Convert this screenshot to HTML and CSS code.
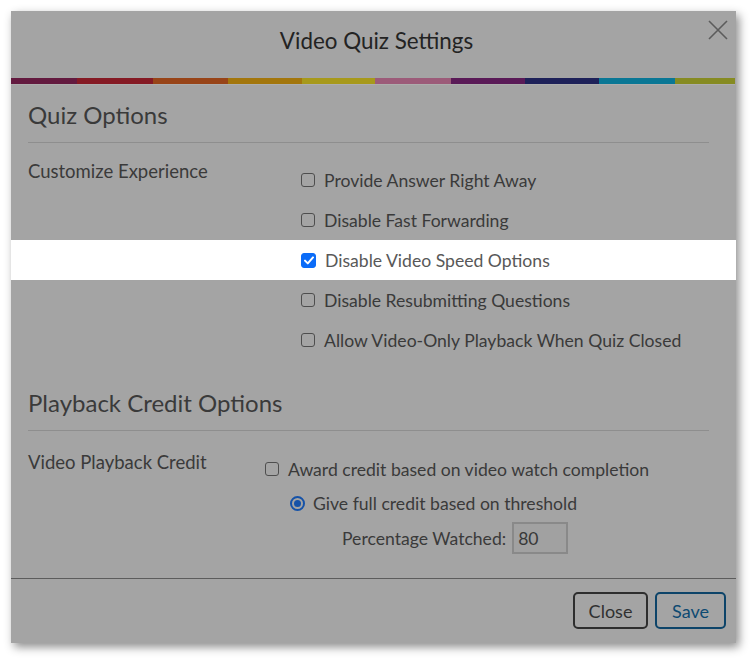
FILE: index.html
```html
<!DOCTYPE html>
<html>
<head>
<meta charset="utf-8">
<link rel="stylesheet" href="styles.css">
</head>
<body>
<div class="dialog">
  <div class="header">
    <h1 class="title">Video Quiz Settings</h1>
    <button class="close-x" aria-label="Close">
      <svg width="20" height="20" viewBox="0 0 20 20"><path d="M1 1L19 19M19 1L1 19" stroke="#5c5c5c" stroke-width="1.6" fill="none"/></svg>
    </button>
  </div>
  <div class="colorbar">
    <span class="seg" style="flex:66;background:#631a3f"></span>
    <span class="seg" style="flex:76;background:#851a24"></span>
    <span class="seg" style="flex:75;background:#984418"></span>
    <span class="seg" style="flex:74;background:#a3760c"></span>
    <span class="seg" style="flex:74;background:#a7991b"></span>
    <span class="seg" style="flex:76;background:#9c5b79"></span>
    <span class="seg" style="flex:74;background:#5a1a57"></span>
    <span class="seg" style="flex:74;background:#1e2159"></span>
    <span class="seg" style="flex:76;background:#0a7795"></span>
    <span class="seg" style="flex:60;background:#868b22"></span>
  </div>
  <div class="body">
    <h2 class="section-title first">Quiz Options</h2>
    <div class="field field-quiz">
      <div class="field-label">Customize Experience</div>
      <div class="options">
        <div class="opt"><span class="cb"></span><span>Provide Answer Right Away</span></div>
        <div class="opt"><span class="cb"></span><span>Disable Fast Forwarding</span></div>
        <div class="opt opt-hl"><span class="cb cb-on"><svg width="10" height="9" viewBox="0 0 10 9"><path d="M1 4.6L3.8 7.4L9 1.4" stroke="#fff" stroke-width="2" fill="none" stroke-linecap="round" stroke-linejoin="round"/></svg></span><span>Disable Video Speed Options</span></div>
        <div class="opt"><span class="cb"></span><span>Disable Resubmitting Questions</span></div>
        <div class="opt"><span class="cb"></span><span>Allow Video-Only Playback When Quiz Closed</span></div>
      </div>
    </div>
    <h2 class="section-title second">Playback Credit Options</h2>
    <div class="field field-credit">
      <div class="field-label">Video Playback Credit</div>
      <div class="options">
        <div class="opt opt-award"><span class="cb"></span><span>Award credit based on video watch completion</span></div>
        <div class="opt opt-radio"><span class="radio"><span class="dot"></span></span><span>Give full credit based on threshold</span></div>
        <div class="opt opt-pct"><span>Percentage Watched:</span><span class="pct-input">80</span></div>
      </div>
    </div>
  </div>
  <div class="footer">
    <button class="btn btn-close">Close</button>
    <button class="btn btn-save">Save</button>
  </div>
</div>
</body>
</html>
```
FILE: styles.css
```css
* { box-sizing: border-box; }
html, body { margin: 0; padding: 0; background: #ffffff; }
body {
  font-family: Lato, "Liberation Sans", sans-serif;
  color: #3a3a3a;
  width: 756px;
  height: 662px;
  overflow: hidden;
  padding: 11px 0 0 11px;
}
.dialog {
  position: relative;
  width: 725px;
  height: 632px;
  background: #a4a4a4;
  box-shadow: 3px 4px 9px rgba(0,0,0,0.45);
  display: flex;
  flex-direction: column;
}
.header {
  height: 67px;
  padding-top: 16px;
  padding-left: 6px;
  text-align: center;
}
.title {
  margin: 0;
  font-size: 22.4px;
  line-height: 28px;
  font-weight: 400;
  color: #232323;
}
.close-x {
  position: absolute;
  top: 9px;
  left: 697px;
  width: 20px;
  height: 20px;
  padding: 0;
  border: 0;
  background: none;
  display: block;
}
.close-x svg { display: block; }
.colorbar {
  display: flex;
  height: 7px;
  border-bottom: 1px solid #adadad;
  margin-right: 1px;
}
.seg { display: block; height: 6px; }
.body {
  flex: 1;
}
.section-title {
  margin: 0 27px 0 17px;
  font-size: 24px;
  line-height: 30px;
  font-weight: 400;
  color: #3a3a3a;
  padding-bottom: 12px;
  border-bottom: 1px solid #8e8e8e;
}
.section-title.first { margin-top: 15px; }
.section-title.second { margin-top: 28px; }
.field {
  display: grid;
  padding-left: 17px;
}
.field-quiz { grid-template-columns: 273px 1fr; margin-top: 17px; }
.field-credit { grid-template-columns: 237px 1fr; margin-top: 19px; }
.field-label {
  font-size: 18.5px;
  line-height: 22px;
}
.field-credit .field-label { padding-top: 1px; }
.options { display: flex; flex-direction: column; }
.opt {
  display: flex;
  align-items: center;
  gap: 9px;
  height: 40px;
  font-size: 17.6px;
}
.opt-hl {
  background: #ffffff;
  color: #585858;
  margin-left: -290px;
  padding-left: 290px;
}
.cb {
  width: 14px;
  height: 14px;
  border: 1px solid #4e4e4e;
  border-radius: 3px;
  flex: none;
  display: flex;
  align-items: center;
  justify-content: center;
}
.cb-on {
  width: 15px;
  height: 15px;
  background: #0b6cf8;
  border-color: #0b6cf8;
}
.cb-on svg { display: block; }
.opt-award { height: 38px; }
.opt-radio { height: 30px; padding-left: 25px; gap: 8px; }
.radio {
  width: 15px;
  height: 15px;
  border-radius: 50%;
  border: 2px solid #1552a8;
  display: flex;
  align-items: center;
  justify-content: center;
  flex: none;
}
.dot { width: 7px; height: 7px; border-radius: 50%; background: #1552a8; }
.opt-pct {
  height: 32px;
  margin-top: 4px;
  padding-left: 77px;
  gap: 6px;
}
.pct-input {
  width: 56px;
  height: 32px;
  border: 2px solid #898989;
  background: #a1a1a1;
  padding-left: 4px;
  display: flex;
  align-items: center;
  color: #383838;
}
.footer {
  border-top: 1px solid #5c5c5c;
  height: 65px;
  display: flex;
  justify-content: flex-end;
  align-items: flex-start;
  gap: 7px;
  padding: 13px 10px 0 0;
}
.btn {
  height: 37px;
  font-family: inherit;
  font-size: 18px;
  background: transparent;
  border-radius: 5px;
  padding: 0;
}
.btn-close { width: 75px; border: 2px solid #2e2e2e; color: #303030; }
.btn-save { width: 71px; border: 2px solid #0d4469; color: #0d4a72; }
```
